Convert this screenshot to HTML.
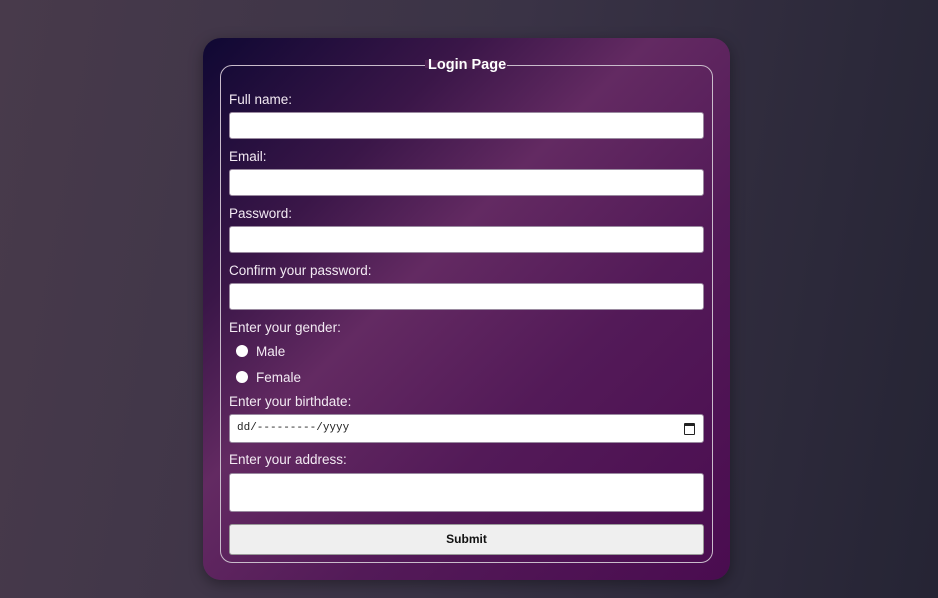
<!DOCTYPE html>
<html><head><meta charset="utf-8"><style>
html,body{margin:0;width:938px;height:598px;overflow:hidden}
body{background:linear-gradient(100deg,#483a4b 0%,#3a3346 50%,#252434 100%);font-family:"Liberation Sans",sans-serif;position:relative}
.card{position:absolute;left:203px;top:38px;width:527px;height:542px;border-radius:18px;
background:linear-gradient(135deg,#0f0833 0%,#3a1648 25%,#632a62 42%,#531a58 65%,#4a0c50 100%);box-shadow:0 4px 14px rgba(0,0,0,.35)}
.fs{position:absolute;left:220px;top:65px;width:491px;height:496px;border:1px solid #c9bccb;border-radius:12px}
.legend{position:absolute;left:426px;top:57px;padding:0 2px;color:#fff;font-weight:bold;font-size:14.5px}
.lg-mask{position:absolute;left:425px;top:60px;width:82px;height:8px;background:#4f2254}
.lbl{position:absolute;left:229px;color:#f3eaf3;font-size:13.5px}
.in{position:absolute;left:229px;width:473px;background:#fff;border:1px solid #9a8aa0;border-radius:3px}
.r{position:absolute;left:236px;width:12px;height:12px;border-radius:50%;background:#fff}
.btn{position:absolute;left:229px;top:524px;width:473px;height:29px;background:#efefef;border:1px solid #999;border-radius:3px;font-weight:bold;font-size:12px;text-align:center;line-height:29px;color:#111}
</style></head><body>
<div class="card"></div>
<div class="fs"></div>
<div class="lg-mask"></div>
<div class="legend">Login Page</div>
<div class="lbl" style="top:92px">Full name:</div>
<div class="in" style="top:112px;height:25px"></div>
<div class="lbl" style="top:149px">Email:</div>
<div class="in" style="top:169px;height:25px"></div>
<div class="lbl" style="top:206px">Password:</div>
<div class="in" style="top:226px;height:25px"></div>
<div class="lbl" style="top:263px">Confirm your password:</div>
<div class="in" style="top:283px;height:25px"></div>
<div class="lbl" style="top:320px">Enter your gender:</div>
<div class="r" style="top:345px"></div><div class="lbl" style="left:256px;top:344px">Male</div>
<div class="r" style="top:371px"></div><div class="lbl" style="left:256px;top:370px">Female</div>
<div class="lbl" style="top:394px">Enter your birthdate:</div>
<div class="in" style="top:414px;height:27px"><span style="position:absolute;left:7px;top:7px;font-family:'Liberation Mono',monospace;font-size:11px;color:#222">dd/---------/yyyy</span><span style="position:absolute;right:8px;top:8px;width:9px;height:8px;border:1.5px solid #222;border-top-width:3px;border-radius:1px"></span></div>
<div class="lbl" style="top:452px">Enter your address:</div>
<div class="in" style="top:473px;height:37px"></div>
<div class="btn">Submit</div>
</body></html>
